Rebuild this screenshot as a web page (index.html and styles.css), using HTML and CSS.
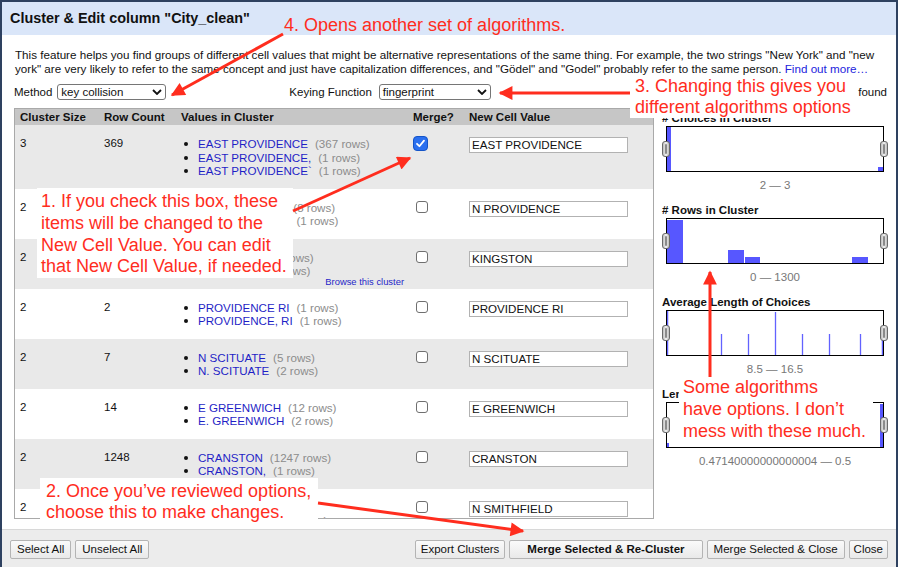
FILE: index.html
```html
<!DOCTYPE html>
<html>
<head>
<meta charset="utf-8">
<title>Cluster &amp; Edit</title>
<link rel="stylesheet" href="styles.css">
</head>
<body>
<div class="dialog">
  <div class="dlg-header">Cluster &amp; Edit column "City_clean"</div>
  <div class="dlg-body">
    <p class="desc">This feature helps you find groups of different cell values that might be alternative representations of the same thing. For example, the two strings "New York" and "new york" are very likely to refer to the same concept and just have capitalization differences, and "Gödel" and "Godel" probably refer to the same person. <a class="link">Find out more…</a></p>
    <div class="controls">
      <span class="lbl">Method</span>
      <span class="select sel-method"><span class="sel-text">key collision</span><svg class="chev" width="10" height="6" viewBox="0 0 10 6"><path d="M1 1 L5 5 L9 1" fill="none" stroke="#111" stroke-width="1.8"/></svg></span>
      <span class="lbl kf">Keying Function</span>
      <span class="select sel-key"><span class="sel-text">fingerprint</span><svg class="chev" width="10" height="6" viewBox="0 0 10 6"><path d="M1 1 L5 5 L9 1" fill="none" stroke="#111" stroke-width="1.8"/></svg></span>
      <span class="found">found</span>
    </div>
    <div class="main">
      <div class="table-wrap">
        <table class="clusters">
          <colgroup><col class="c1"><col class="c2"><col class="c3"><col class="c4"><col class="c5"></colgroup>
          <thead>
            <tr><th>Cluster Size</th><th>Row Count</th><th>Values in Cluster</th><th>Merge?</th><th>New Cell Value</th></tr>
          </thead>
          <tbody>
            <tr class="odd">
              <td>3</td><td>369</td>
              <td><ul class="vals"><li><a>EAST PROVIDENCE</a><span class="cnt">(367 rows)</span></li><li><a>EAST PROVIDENCE,</a><span class="cnt">(1 rows)</span></li><li><a>EAST PROVIDENCE`</a><span class="cnt">(1 rows)</span></li></ul></td>
              <td><span class="cb checked"><svg width="15" height="15" viewBox="0 0 15 15"><path d="M4 7.8 L6.4 10.2 L11 4.6" fill="none" stroke="#fff" stroke-width="1.8" stroke-linecap="round" stroke-linejoin="round"/></svg></span></td>
              <td><span class="inp">EAST PROVIDENCE</span></td>
            </tr>
            <tr>
              <td>2</td><td>9</td>
              <td><ul class="vals"><li><a>N PROVIDENCE</a><span class="cnt">(8 rows)</span></li><li><a>N. PROVIDENCE</a><span class="cnt">(1 rows)</span></li></ul></td>
              <td><span class="cb"></span></td>
              <td><span class="inp">N PROVIDENCE</span></td>
            </tr>
            <tr class="odd">
              <td>2</td><td>22</td>
              <td class="hover"><ul class="vals"><li><a>KINGSTON</a><span class="cnt">(21 rows)</span></li><li><a>KINGSTON,</a><span class="cnt">(1 rows)</span></li></ul><a class="browse">Browse this cluster</a></td>
              <td><span class="cb"></span></td>
              <td><span class="inp">KINGSTON</span></td>
            </tr>
            <tr>
              <td>2</td><td>2</td>
              <td><ul class="vals"><li><a>PROVIDENCE RI</a><span class="cnt">(1 rows)</span></li><li><a>PROVIDENCE, RI</a><span class="cnt">(1 rows)</span></li></ul></td>
              <td><span class="cb"></span></td>
              <td><span class="inp">PROVIDENCE RI</span></td>
            </tr>
            <tr class="odd">
              <td>2</td><td>7</td>
              <td><ul class="vals"><li><a>N SCITUATE</a><span class="cnt">(5 rows)</span></li><li><a>N. SCITUATE</a><span class="cnt">(2 rows)</span></li></ul></td>
              <td><span class="cb"></span></td>
              <td><span class="inp">N SCITUATE</span></td>
            </tr>
            <tr>
              <td>2</td><td>14</td>
              <td><ul class="vals"><li><a>E GREENWICH</a><span class="cnt">(12 rows)</span></li><li><a>E. GREENWICH</a><span class="cnt">(2 rows)</span></li></ul></td>
              <td><span class="cb"></span></td>
              <td><span class="inp">E GREENWICH</span></td>
            </tr>
            <tr class="odd">
              <td>2</td><td>1248</td>
              <td><ul class="vals"><li><a>CRANSTON</a><span class="cnt">(1247 rows)</span></li><li><a>CRANSTON,</a><span class="cnt">(1 rows)</span></li></ul></td>
              <td><span class="cb"></span></td>
              <td><span class="inp">CRANSTON</span></td>
            </tr>
            <tr>
              <td>2</td><td>6</td>
              <td><ul class="vals"><li><a>SMITHFIELD</a><span class="cnt">(3 rows)</span></li><li><a>N SMITHFIELD</a><span class="cnt">(3 rows)</span></li></ul></td>
              <td><span class="cb"></span></td>
              <td><span class="inp">N SMITHFIELD</span></td>
            </tr>
          </tbody>
        </table>
      </div>
      <div class="facets">
        <div class="facet">
          <div class="facet-title"># Choices in Cluster</div>
          <div class="hist">
            <svg width="216" height="44" viewBox="0 0 216 44"><rect x="0" y="0" width="4" height="44" fill="#5757ff"/><rect x="211" y="40" width="5" height="4" fill="#5757ff"/></svg>
            <span class="handle hl"></span><span class="handle hr"></span>
          </div>
          <div class="range">2 — 3</div>
        </div>
        <div class="facet">
          <div class="facet-title"># Rows in Cluster</div>
          <div class="hist">
            <svg width="216" height="44" viewBox="0 0 216 44">
              <rect x="0" y="1" width="16" height="43" fill="#5757ff"/>
              <rect x="61" y="31" width="16" height="13" fill="#5757ff"/>
              <rect x="78" y="38" width="15" height="6" fill="#5757ff"/>
              <rect x="185" y="38" width="16" height="6" fill="#5757ff"/>
            </svg>
            <span class="handle hl"></span><span class="handle hr"></span>
          </div>
          <div class="range">0 — 1300</div>
        </div>
        <div class="facet">
          <div class="facet-title">Average Length of Choices</div>
          <div class="hist">
            <svg width="216" height="44" viewBox="0 0 216 44" stroke="#6262ff" stroke-width="1.3">
              <line x1="0.6" y1="0" x2="0.6" y2="44"/>
              <line x1="54.5" y1="23" x2="54.5" y2="44"/>
              <line x1="81.5" y1="23" x2="81.5" y2="44"/>
              <line x1="108.5" y1="1" x2="108.5" y2="44"/>
              <line x1="135.5" y1="23" x2="135.5" y2="44"/>
              <line x1="162.5" y1="23" x2="162.5" y2="44"/>
              <line x1="193.5" y1="23" x2="193.5" y2="44"/>
              <line x1="215.4" y1="23" x2="215.4" y2="44"/>
            </svg>
            <span class="handle hl"></span><span class="handle hr"></span>
          </div>
          <div class="range">8.5 — 16.5</div>
        </div>
        <div class="facet">
          <div class="facet-title">Length Variance of Choices</div>
          <div class="hist">
            <svg width="216" height="44" viewBox="0 0 216 44"><rect x="0" y="40" width="2" height="4" fill="#5757ff"/><rect x="213" y="1" width="3" height="43" fill="#5757ff"/></svg>
            <span class="handle hl"></span><span class="handle hr"></span>
          </div>
          <div class="range">0.47140000000000004 — 0.5</div>
        </div>
      </div>
    </div>
  </div>
  <div class="dlg-footer">
    <div class="btn-group">
      <button class="btn">Select All</button>
      <button class="btn">Unselect All</button>
    </div>
    <div class="btn-group">
      <button class="btn compact">Export Clusters</button>
      <button class="btn primary">Merge Selected &amp; Re-Cluster</button>
      <button class="btn">Merge Selected &amp; Close</button>
      <button class="btn narrow">Close</button>
    </div>
  </div>
</div>

<div class="note note-top">4. Opens another set of algorithms.</div>
<div class="note note-1">1. If you check this box, these<br>items will be changed to the<br>New Cell Value. You can edit<br>that New Cell Value, if needed.</div>
<div class="note note-3">3. Changing this gives you<br>different algorithms options</div>
<div class="note note-4">Some algorithms<br>have options. I don’t<br>mess with these much.</div>
<div class="note note-2">2. Once you’ve reviewed options,<br>choose this to make changes.</div>

<svg class="arrows" width="902" height="567" viewBox="0 0 902 567">
  <defs>
    <marker id="ah" viewBox="0 0 10 10" refX="9" refY="5" markerWidth="5" markerHeight="4.6" orient="auto" markerUnits="strokeWidth">
      <path d="M0,0 L10,5 L0,10 z" fill="#ff2d1e"/>
    </marker>
  </defs>
  <g stroke="#ff2d1e" stroke-width="3" fill="none" marker-end="url(#ah)">
    <line x1="283" y1="34" x2="172" y2="95"/>
    <line x1="293" y1="211" x2="410" y2="158"/>
    <line x1="630" y1="93" x2="500" y2="93"/>
    <line x1="710" y1="377" x2="710" y2="272"/>
    <line x1="318" y1="503" x2="523" y2="531"/>
  </g>
</svg>
</body>
</html>
```

FILE: styles.css
```css
* { box-sizing: border-box; }

html, body {
  margin: 0;
  padding: 0;
  background: #fff;
}

body {
  width: 902px;
  height: 567px;
  overflow: hidden;
  position: relative;
  font-family: "Liberation Sans", Arial, Helvetica, sans-serif;
  font-size: 11.5px;
  color: #111;
}

.dialog {
  width: 898px;
  height: 567px;
  border: 2px solid #2e4160;
  border-bottom: none;
  display: flex;
  flex-direction: column;
  overflow: hidden;
  background: #fff;
}

.dlg-header {
  height: 33px;
  line-height: 33px;
  flex: none;
  padding-left: 8px;
  background: #dae6f9;
  font-weight: bold;
  font-size: 14.4px;
  color: #111;
}

.dlg-body {
  flex: none;
  padding: 13px 9px 10px 12px;
}

.desc {
  margin: 0;
  line-height: 14px;
  padding-left: 1px;
  font-size: 11.65px;
}

.link { color: #2222dd; }

.controls {
  display: flex;
  align-items: center;
  height: 16px;
  margin-top: 8px;
}

.lbl { line-height: 14px; }
.kf { margin-left: 123px; }

.select {
  display: flex;
  align-items: center;
  justify-content: space-between;
  height: 16px;
  border: 1px solid #767676;
  border-radius: 3px;
  padding: 0 3px 0 3px;
  margin-left: 5px;
  background: #fff;
  line-height: 14px;
}
.sel-method { width: 109px; }
.sel-key { width: 112px; margin-left: 7px; }
.chev { display: block; }

.found { margin-left: auto; }

.main {
  display: flex;
  margin-top: 8px;
}

.table-wrap {
  width: 640px;
  height: 411px;
  border: 1px solid #a9a9a9;
  overflow: hidden;
  flex: none;
}

.clusters {
  border-collapse: collapse;
  table-layout: fixed;
  width: 638px;
}
.c1 { width: 84px; }
.c2 { width: 77px; }
.c3 { width: 232px; }
.c4 { width: 56px; }
.c5 { width: 189px; }

.clusters th {
  background: #c6c6c6;
  text-align: left;
  font-weight: bold;
  height: 16px;
  line-height: 14px;
  padding: 1px 5px;
  white-space: nowrap;
}

.clusters td {
  vertical-align: top;
  padding: 12px 5px 11px 5px;
  line-height: 13.5px;
}

.clusters tr.odd td { background: #e9e9e9; }

.vals {
  margin: 0;
  padding: 0 0 0 17px;
  list-style: none;
  font-size: 11.6px;
  white-space: nowrap;
}
.vals li::before {
  content: "";
  display: inline-block;
  width: 4px;
  height: 4px;
  border-radius: 50%;
  background: #111;
  margin-left: -14px;
  margin-right: 10px;
  vertical-align: 2px;
}
.vals a { color: #1f1fc6; }
.cnt { color: #8c8c8c; margin-left: 7px; }

.hover { position: relative; }
.browse {
  position: absolute;
  right: 4px;
  bottom: 2px;
  font-size: 9.4px;
  line-height: 11px;
  color: #2626c8;
}

.cb {
  display: block;
  width: 12px;
  height: 12px;
  margin-left: 3px;
  border: 1px solid #6f6f6f;
  border-radius: 3px;
  background: #fff;
}
.cb.checked {
  width: 15px;
  height: 15px;
  margin-left: 0;
  margin-top: -1px;
  border: 1px solid #1454c8;
  background: #2b70ef;
  border-radius: 4px;
}
.cb.checked svg { display: block; margin: -1px; }

.inp {
  display: block;
  width: 159px;
  height: 16px;
  border: 1px solid #b2b2b2;
  padding: 0 2px;
  line-height: 14px;
  font-size: 11.6px;
  background: #fff;
  white-space: nowrap;
  overflow: hidden;
}

.facets {
  width: 232px;
  padding: 3px 0 0 8px;
}

.facet-title {
  font-weight: bold;
  line-height: 14px;
  margin-bottom: 1px;
  white-space: nowrap;
}

.hist {
  position: relative;
  width: 218px;
  height: 46px;
  border: 1px solid #000;
  margin-left: 4px;
  background: #fff;
}
.hist svg { display: block; }

.handle {
  position: absolute;
  top: 14px;
  width: 8px;
  height: 16px;
  border: 1px solid #6a6a6a;
  border-radius: 3px;
  background: linear-gradient(to right, #bdbdbd, #f2f2f2 50%, #bdbdbd);
}
.handle::after {
  content: "";
  position: absolute;
  left: 2px;
  top: 2px;
  width: 2px;
  height: 10px;
  background: #8a8a8a;
  border-radius: 1px;
}
.hl { left: -5px; }
.hr { right: -5px; }

.range {
  width: 218px;
  margin-left: 4px;
  margin-top: 6px;
  margin-bottom: 11px;
  line-height: 14px;
  text-align: center;
  color: #777;
}

.dlg-footer {
  flex: none;
  display: flex;
  justify-content: space-between;
  height: 40px;
  padding: 10px 8px 0 8px;
  background: #ececec;
  border-top: 1px solid #d8d8d8;
}

.btn-group {
  display: flex;
  gap: 4px;
  align-items: flex-start;
}

.btn {
  height: 19px;
  padding: 0 6px;
  font-family: "Liberation Sans", Arial, Helvetica, sans-serif;
  font-size: 11.5px;
  line-height: 17px;
  color: #111;
  background: linear-gradient(#fafafa, #e9e9e9);
  border: 1px solid #b4b4b4;
  border-radius: 2px;
}
.btn.compact {
  padding: 0 5px;
}
.btn.primary {
  font-weight: bold;
  padding: 0 17px;
}
.btn.narrow {
  padding: 0 4px;
}

.note {
  position: absolute;
  background: #fff;
  color: #ff2d1e;
  font-size: 18px;
  line-height: 22px;
  white-space: nowrap;
}
.note-top {
  left: 284px;
  top: 14px;
  background: transparent;
}
.note-1 {
  left: 37px;
  top: 188px;
  width: 256px;
  height: 90px;
  padding: 3px 0 0 4px;
  line-height: 21.8px;
}
.note-3 {
  left: 630px;
  top: 76px;
  width: 226px;
  height: 42px;
  padding: 0 0 0 5px;
  line-height: 21px;
}
.note-4 {
  left: 679px;
  top: 376px;
  width: 194px;
  height: 63px;
  padding: 0 0 0 4px;
}
.note-2 {
  left: 40px;
  top: 478px;
  width: 278px;
  height: 44px;
  padding: 3px 0 0 6px;
  line-height: 21px;
}

.arrows {
  position: absolute;
  left: 0;
  top: 0;
  pointer-events: none;
}
```
